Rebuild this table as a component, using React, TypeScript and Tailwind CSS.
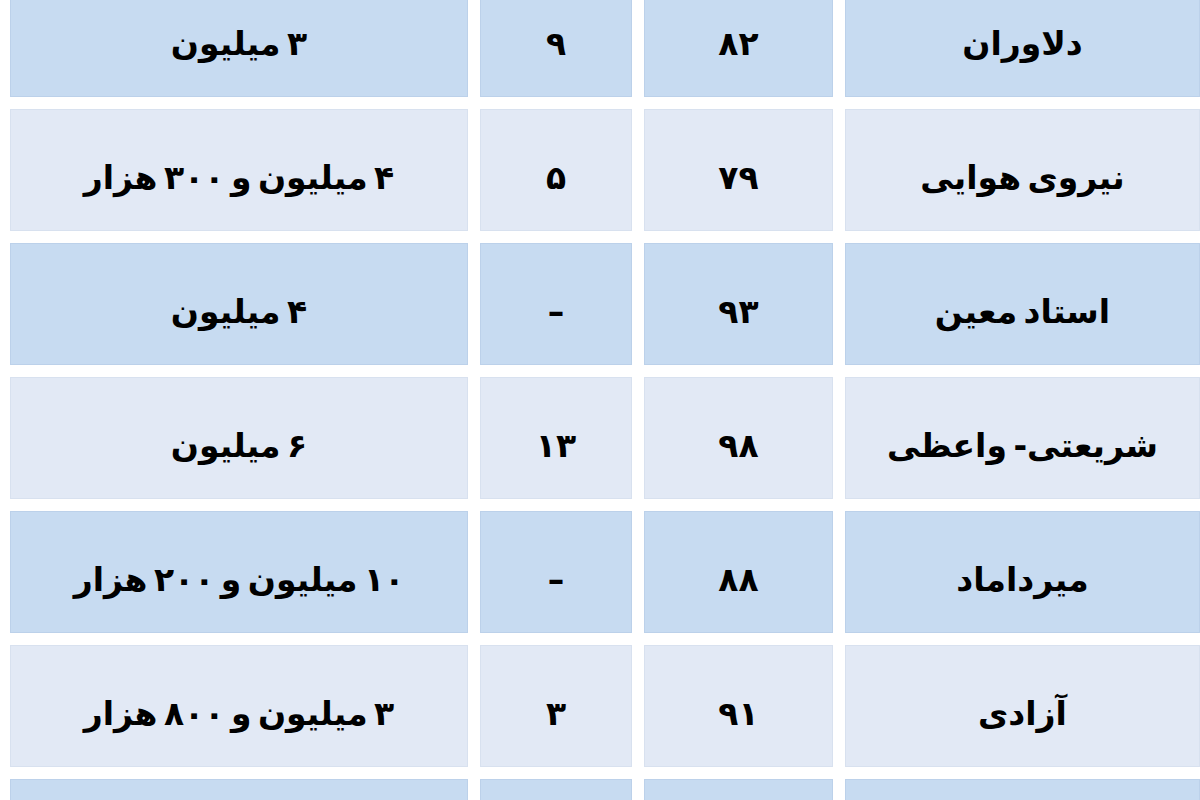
const rows = [
  ["دلاوران", "۸۲", "۹", "۳ میلیون"],
  ["نیروی هوایی", "۷۹", "۵", "۴ میلیون و ۳۰۰ هزار"],
  ["استاد معین", "۹۳", "–", "۴ میلیون"],
  ["شریعتی- واعظی", "۹۸", "۱۳", "۶ میلیون"],
  ["میرداماد", "۸۸", "–", "۱۰ میلیون و ۲۰۰ هزار"],
  ["آزادی", "۹۱", "۳", "۳ میلیون و ۸۰۰ هزار"],
  ["", "", "", ""],
];

export default function App() {
  return (
    <div className="w-[1200px] h-[800px] overflow-hidden bg-white" dir="rtl">
      <div
        className="grid grid-cols-[355px_189px_152px_458px] auto-rows-[122px] gap-x-3 gap-y-3 pl-[10px] -mt-[25px] text-black font-bold text-[33px] [word-spacing:-5px]"
        style={{ fontFamily: '"DejaVu Sans", "Noto Sans", sans-serif' }}
      >
        {rows.map((row, i) =>
          row.map((cell, j) => (
            <div
              key={i + "-" + j}
              className={
                "flex items-center justify-center border " +
                (i % 2 === 0
                  ? "bg-[#c7dbf1] border-[#bcd1ea]"
                  : "bg-[#e2e9f5] border-[#d8e1ef]")
              }
            >
              <span className="pt-4">{cell}</span>
            </div>
          ))
        )}
      </div>
    </div>
  );
}
